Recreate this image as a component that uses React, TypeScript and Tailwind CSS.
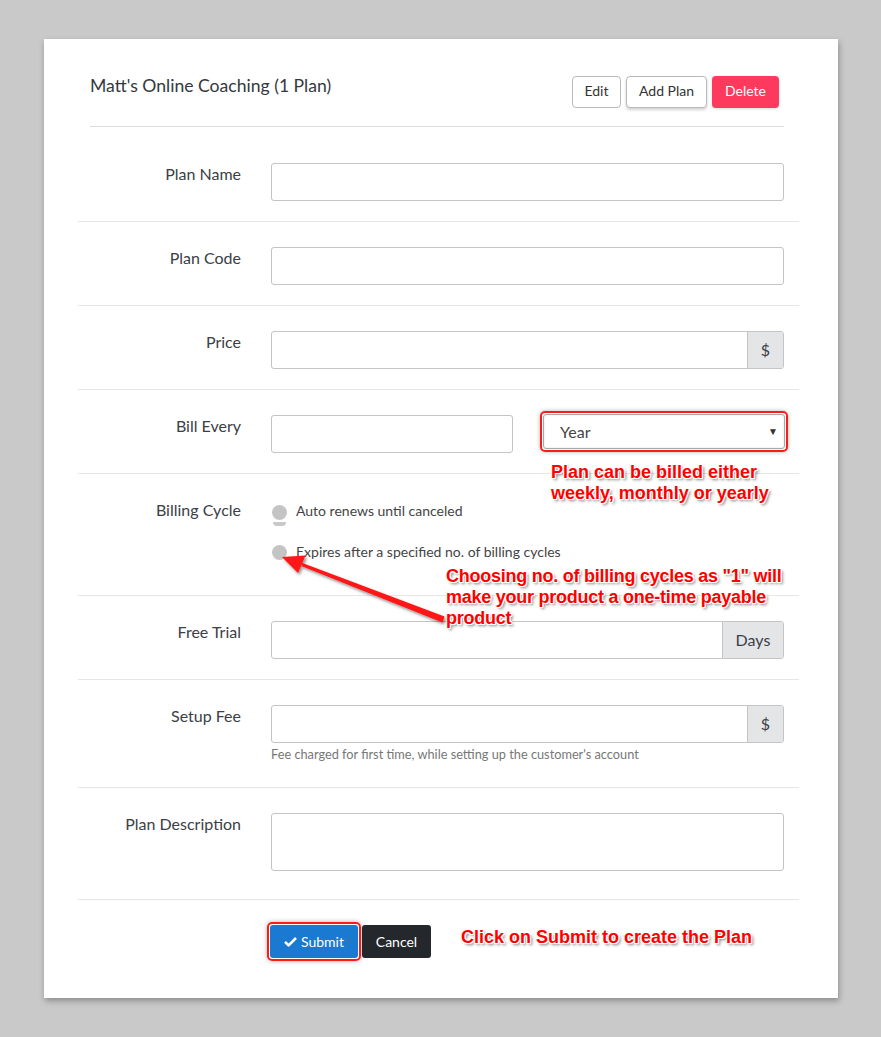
import React from "react";

const ann =
  "absolute font-bold text-[#ff0000] text-[18px] leading-[21px] [font-family:'Liberation_Sans',Arial,sans-serif] [text-shadow:1px_0_0_#fff,-1px_0_0_#fff,0_1px_0_#fff,0_-1px_0_#fff,1px_1px_0_#fff,-1px_-1px_0_#fff,1px_-1px_0_#fff,-1px_1px_0_#fff,2px_2px_3px_rgba(0,0,0,0.55)]";

function Row({
  label,
  children,
  pt = "pt-[25px]",
  pb = "pb-[20px]",
}: {
  label: string;
  children: React.ReactNode;
  pt?: string;
  pb?: string;
}) {
  return (
    <div className={`flex border-b border-[#e6e6e6] ${pt} ${pb}`}>
      <div className="w-[163px] shrink-0 text-right text-[16px] leading-[18px] pt-[2px] text-[#3b4045]">
        {label}
      </div>
      <div className="ml-[30px] w-[513px] shrink-0">{children}</div>
    </div>
  );
}

const inputCls =
  "h-[38px] rounded-[3px] border border-[#c4c4c4] bg-white";

function AddonInput({ addon, w }: { addon: string; w: string }) {
  return (
    <div className="flex h-[38px] rounded-[3px] border border-[#c4c4c4] bg-white overflow-hidden">
      <div className="flex-1" />
      <div
        className={`${w} bg-[#e3e5e7] border-l border-[#c4c4c4] flex items-center justify-center text-[16px] text-[#3b4045]`}
      >
        {addon}
      </div>
    </div>
  );
}

export default function App() {
  return (
    <div className="relative min-h-[1037px] w-[881px] bg-[#c9c9c9] pt-[39px] pl-[44px] [font-family:Lato,'Open_Sans',sans-serif]">
      <div className="w-[794px] h-[959px] bg-white shadow-[1px_3px_6px_rgba(0,0,0,0.3)]">
        {/* header */}
        <div className="flex justify-between items-start pl-[46px] pr-[59px] pt-[37px]">
          <div className="text-[17.6px] leading-[20px] text-[#33383d]">
            Matt's Online Coaching (1 Plan)
          </div>
          <div className="flex gap-[5px]">
            <button className="h-[32px] w-[49px] rounded-[4px] border border-[#b9b9b9] bg-white text-[14px] text-[#333] pb-[3px]">
              Edit
            </button>
            <button className="h-[32px] w-[81px] rounded-[4px] border border-[#b9b9b9] bg-white text-[14px] text-[#333] pb-[3px] shadow-[0_2px_3px_rgba(0,0,0,0.18)]">
              Add Plan
            </button>
            <button className="h-[32px] w-[67px] rounded-[4px] bg-[#fd3a5e] text-[14px] text-white pb-[3px] shadow-[0_1px_3px_rgba(0,0,0,0.15)]">
              Delete
            </button>
          </div>
        </div>
        <div className="ml-[46px] mr-[54px] mt-[18px] border-t border-[#dcdcdc]" />

        {/* form */}
        <div className="ml-[34px] mr-[39px]">
          <Row label="Plan Name" pt="pt-[36px]">
            <div className={inputCls} />
          </Row>
          <Row label="Plan Code">
            <div className={inputCls} />
          </Row>
          <Row label="Price">
            <AddonInput addon="$" w="w-[36px]" />
          </Row>
          <Row label="Bill Every">
            <div className="flex items-start">
              <div className={`${inputCls} w-[242px] shrink-0`} />
              <div className="ml-[27px] -mt-[4px] w-[248px] shrink-0 h-[41px] rounded-[5px] border-2 border-[#ff1a1a] p-[1px] shadow-[0_0_4px_rgba(0,0,0,0.3)]">
                <div className="h-full rounded-[3px] border border-[#a9a9a9] bg-white flex items-center justify-between pl-[16px] pr-[6px] shadow-[inset_0_0_2px_rgba(0,0,0,0.15)]">
                  <span className="text-[16px] text-[#444]">Year</span>
                  <span className="text-[10px] text-[#333]">▼</span>
                </div>
              </div>
            </div>
          </Row>
          <Row label="Billing Cycle" pb="pb-[35px]">
            <div className="flex flex-col gap-[23px] pl-[1px] pt-[2px]">
              <div className="flex items-center h-[18px]">
                <div className="relative w-[15px] h-[15px] shrink-0">
                  <div className="w-[15px] h-[15px] rounded-full bg-[#c4c4c4] mt-[2px]" />
                  <div className="absolute left-[1px] top-[19px] w-[13px] h-[4px] rounded-b-full bg-[#c8c8c8]" />
                </div>
                <span className="ml-[9px] text-[14px] text-[#444]">
                  Auto renews until canceled
                </span>
              </div>
              <div className="flex items-center h-[18px]">
                <div className="w-[15px] h-[15px] rounded-full bg-[#c4c4c4] mt-[3px] shrink-0" />
                <span className="ml-[9px] text-[14px] text-[#444]">
                  Expires after a specified no. of billing cycles
                </span>
              </div>
            </div>
          </Row>
          <Row label="Free Trial">
            <AddonInput addon="Days" w="w-[61px]" />
          </Row>
          <Row label="Setup Fee" pb="pb-[24px]">
            <AddonInput addon="$" w="w-[36px]" />
            <div className="mt-[2px] text-[12.75px] leading-[18px] text-[#777]">
              Fee charged for first time, while setting up the customer's account
            </div>
          </Row>
          <Row label="Plan Description" pb="pb-[28px]">
            <div className="h-[58px] rounded-[3px] border border-[#c4c4c4] bg-white" />
          </Row>

          {/* footer */}
          <div className="flex items-start pt-[22px] pl-[189px]">
            <div className="rounded-[5px] border-2 border-[#ff1a1a] p-[1px] shadow-[0_0_5px_rgba(0,0,0,0.3)]">
              <button className="h-[33px] w-[88px] rounded-[3px] bg-[#1a7ad1] text-white text-[14px] pb-[1px] flex items-center justify-center gap-[4px]">
                <svg width="13" height="11" viewBox="0 0 13 11">
                  <path d="M1 5.8 L4.6 9.4 L12 2" stroke="#fff" strokeWidth="2.6" fill="none" strokeLinejoin="round" />
                </svg>
                Submit
              </button>
            </div>
            <button className="mt-[3px] ml-[1px] h-[33px] w-[69px] rounded-[3px] bg-[#24282c] text-white text-[14px] pb-[1px]">
              Cancel
            </button>
          </div>
        </div>
      </div>

      {/* annotations */}
      <div className={`${ann} left-[551px] top-[462px]`}>
        Plan can be billed either
        <br />
        weekly, monthly or yearly
      </div>
      <div className={`${ann} left-[446px] top-[566px] leading-[20.5px] tracking-[-0.25px]`}>
        Choosing no. of billing cycles as "1" will
        <br />
        make your product a one-time payable
        <br />
        product
      </div>
      <div className={`${ann} left-[461px] top-[927px]`}>
        Click on Submit to create the Plan
      </div>

      <svg
        className="absolute left-0 top-0 pointer-events-none"
        width="881"
        height="1037"
        viewBox="0 0 881 1037"
      >
        <defs>
          <filter id="sh" x="-20%" y="-20%" width="140%" height="140%">
            <feDropShadow dx="1.5" dy="2" stdDeviation="1.5" floodColor="#000" floodOpacity="0.45" />
          </filter>
        </defs>
        <g filter="url(#sh)" fill="#ff1414">
          <polygon points="282,557 305.5,555.5 298,573" />
          <polygon points="301,562.5 302.5,566.5 442.5,622.5 444.5,616.5" />
        </g>
      </svg>
    </div>
  );
}
